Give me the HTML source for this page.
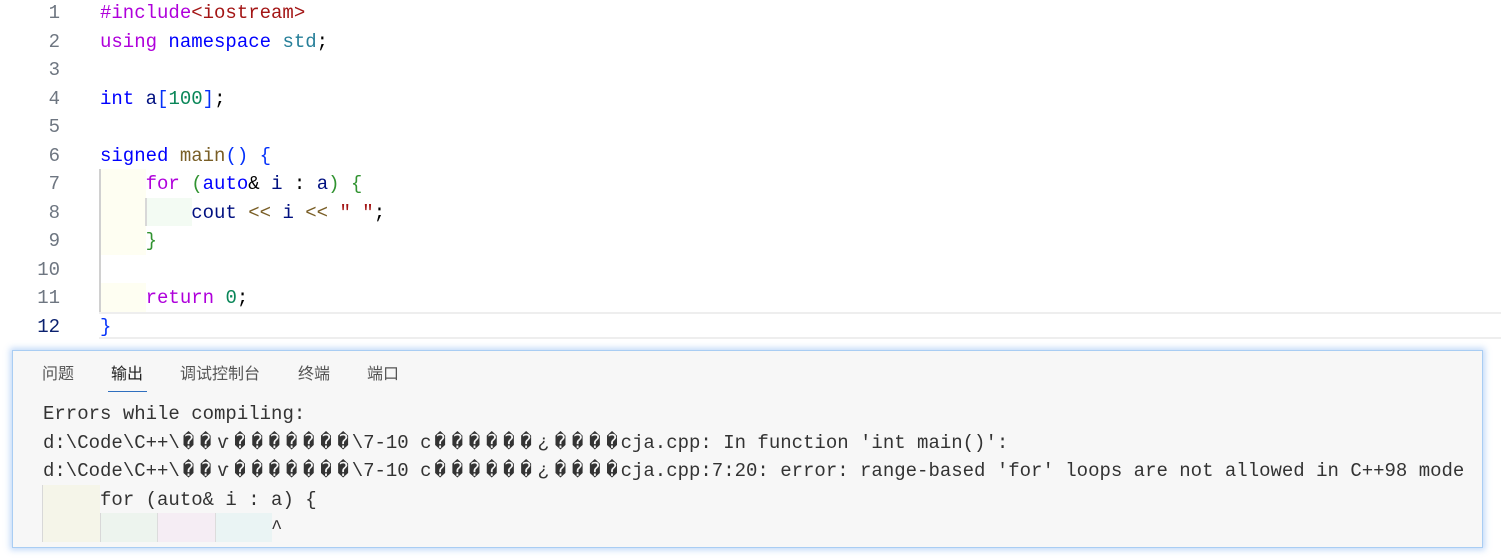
<!DOCTYPE html>
<html><head><meta charset="utf-8"><style>
*{margin:0;padding:0;box-sizing:border-box}
body{width:1501px;height:559px;background:#fff;position:relative;overflow:hidden;font-family:"Liberation Mono",monospace;font-size:19px}
.ln{position:absolute;left:0;width:60px;text-align:right;color:#6e7681;line-height:28.5px;height:28.5px}
.cl{position:absolute;left:100px;white-space:pre;line-height:28.5px;height:28.5px;color:#000}
.b{position:absolute}
.kp{color:#af00db}.kb{color:#0000ff}.ty{color:#267f99}.st{color:#a31515}.nm{color:#098658}.fn{color:#795e26}.vr{color:#001080}.br{color:#0431fa}.br2{color:#319331}
.panel{position:absolute;left:12px;top:350px;width:1471px;height:198px;background:#f7f7f7;border:1px solid #a9cdf3;box-shadow:0 0 6px 2px rgba(120,170,240,.45)}
.tab{position:absolute;top:364px;font-family:"Liberation Sans","Noto Sans CJK SC",sans-serif;font-size:16px;color:#555;line-height:22px}
.ol{position:absolute;left:43px;white-space:pre;line-height:28.5px;height:28.5px;color:#333}
.g{display:inline-block;width:17.2px;text-align:center;overflow:hidden;vertical-align:top}
</style></head><body>
<div class="b" style="left:99px;top:312px;right:0;height:27px;border-top:2px solid #eeeeee;border-bottom:2px solid #eeeeee"></div>
<div class="b" style="left:101px;top:169px;width:45px;height:86px;background:#fefef2"></div>
<div class="b" style="left:101px;top:283px;width:45px;height:29px;background:#fefef2"></div>
<div class="b" style="left:147px;top:198px;width:45px;height:28px;background:#f3fbf3"></div>
<div class="b" style="left:99px;top:169px;width:2px;height:143px;background:#d0d0d0"></div>
<div class="b" style="left:145px;top:198px;width:2px;height:28px;background:#d8d8d8"></div>

<div class="ln" style="top:-1px">1</div>
<div class="ln" style="top:27.5px">2</div>
<div class="ln" style="top:56px">3</div>
<div class="ln" style="top:84.5px">4</div>
<div class="ln" style="top:113px">5</div>
<div class="ln" style="top:141.5px">6</div>
<div class="ln" style="top:170px">7</div>
<div class="ln" style="top:198.5px">8</div>
<div class="ln" style="top:227px">9</div>
<div class="ln" style="top:255.5px">10</div>
<div class="ln" style="top:284px">11</div>
<div class="ln" style="top:312.5px;color:#0b216f">12</div>

<div class="cl" style="top:-1px"><span class="kp">#include</span><span class="st">&lt;iostream&gt;</span></div>
<div class="cl" style="top:27.5px"><span class="kp">using</span> <span class="kb">namespace</span> <span class="ty">std</span>;</div>
<div class="cl" style="top:84.5px"><span class="kb">int</span> <span class="vr">a</span><span class="br">[</span><span class="nm">100</span><span class="br">]</span>;</div>
<div class="cl" style="top:141.5px"><span class="kb">signed</span> <span class="fn">main</span><span class="br">()</span> <span class="br">{</span></div>
<div class="cl" style="top:170px">    <span class="kp">for</span> <span class="br2">(</span><span class="kb">auto</span>&amp; <span class="vr">i</span> : <span class="vr">a</span><span class="br2">)</span> <span class="br2">{</span></div>
<div class="cl" style="top:198.5px">        <span class="vr">cout</span> <span class="fn">&lt;&lt;</span> <span class="vr">i</span> <span class="fn">&lt;&lt;</span> <span class="st">" "</span>;</div>
<div class="cl" style="top:227px">    <span class="br2">}</span></div>
<div class="cl" style="top:284px">    <span class="kp">return</span> <span class="nm">0</span>;</div>
<div class="cl" style="top:312.5px"><span class="br">}</span></div>

<div class="panel"></div>
<div class="tab" style="left:42px">问题</div>
<div class="tab" style="left:111px;color:#222">输出</div>
<div class="b" style="left:108px;top:391px;width:39px;height:1px;background:#2f6fbf"></div>
<div class="tab" style="left:180px">调试控制台</div>
<div class="tab" style="left:298px">终端</div>
<div class="tab" style="left:367px">端口</div>

<div class="b" style="left:43px;top:485px;width:57px;height:57px;background:#f5f5e9"></div>
<div class="b" style="left:101px;top:513px;width:56px;height:29px;background:#edf4ee"></div>
<div class="b" style="left:158px;top:513px;width:57px;height:29px;background:#f5edf4"></div>
<div class="b" style="left:216px;top:513px;width:56px;height:29px;background:#eaf4f4"></div>
<div class="b" style="left:42px;top:485px;width:1px;height:57px;background:#d8d8d8"></div>
<div class="b" style="left:100px;top:513px;width:1px;height:29px;background:#d8d8d8"></div>
<div class="b" style="left:157px;top:513px;width:1px;height:29px;background:#dcdcdc"></div>
<div class="b" style="left:215px;top:513px;width:1px;height:29px;background:#dcdcdc"></div>

<div class="ol" style="top:400px">Errors while compiling:</div>
<div class="ol" style="top:428.5px">d:\Code\C++\<span class="g">�</span><span class="g">�</span><span class="g">ѵ</span><span class="g">�</span><span class="g">�</span><span class="g">�</span><span class="g">�</span><span class="g">�</span><span class="g">�</span><span class="g">�</span>\7-10 c<span class="g">�</span><span class="g">�</span><span class="g">�</span><span class="g">�</span><span class="g">�</span><span class="g">�</span><span class="g">¿</span><span class="g">�</span><span class="g">�</span><span class="g">�</span><span class="g">�</span>cja.cpp: In function 'int main()':</div>
<div class="ol" style="top:457px">d:\Code\C++\<span class="g">�</span><span class="g">�</span><span class="g">ѵ</span><span class="g">�</span><span class="g">�</span><span class="g">�</span><span class="g">�</span><span class="g">�</span><span class="g">�</span><span class="g">�</span>\7-10 c<span class="g">�</span><span class="g">�</span><span class="g">�</span><span class="g">�</span><span class="g">�</span><span class="g">�</span><span class="g">¿</span><span class="g">�</span><span class="g">�</span><span class="g">�</span><span class="g">�</span>cja.cpp:7:20: error: range-based 'for' loops are not allowed in C++98 mode</div>
<div class="ol" style="top:485.5px">     for (auto&amp; i : a) {</div>
<div class="ol" style="top:514px">                    ^</div>
</body></html>
